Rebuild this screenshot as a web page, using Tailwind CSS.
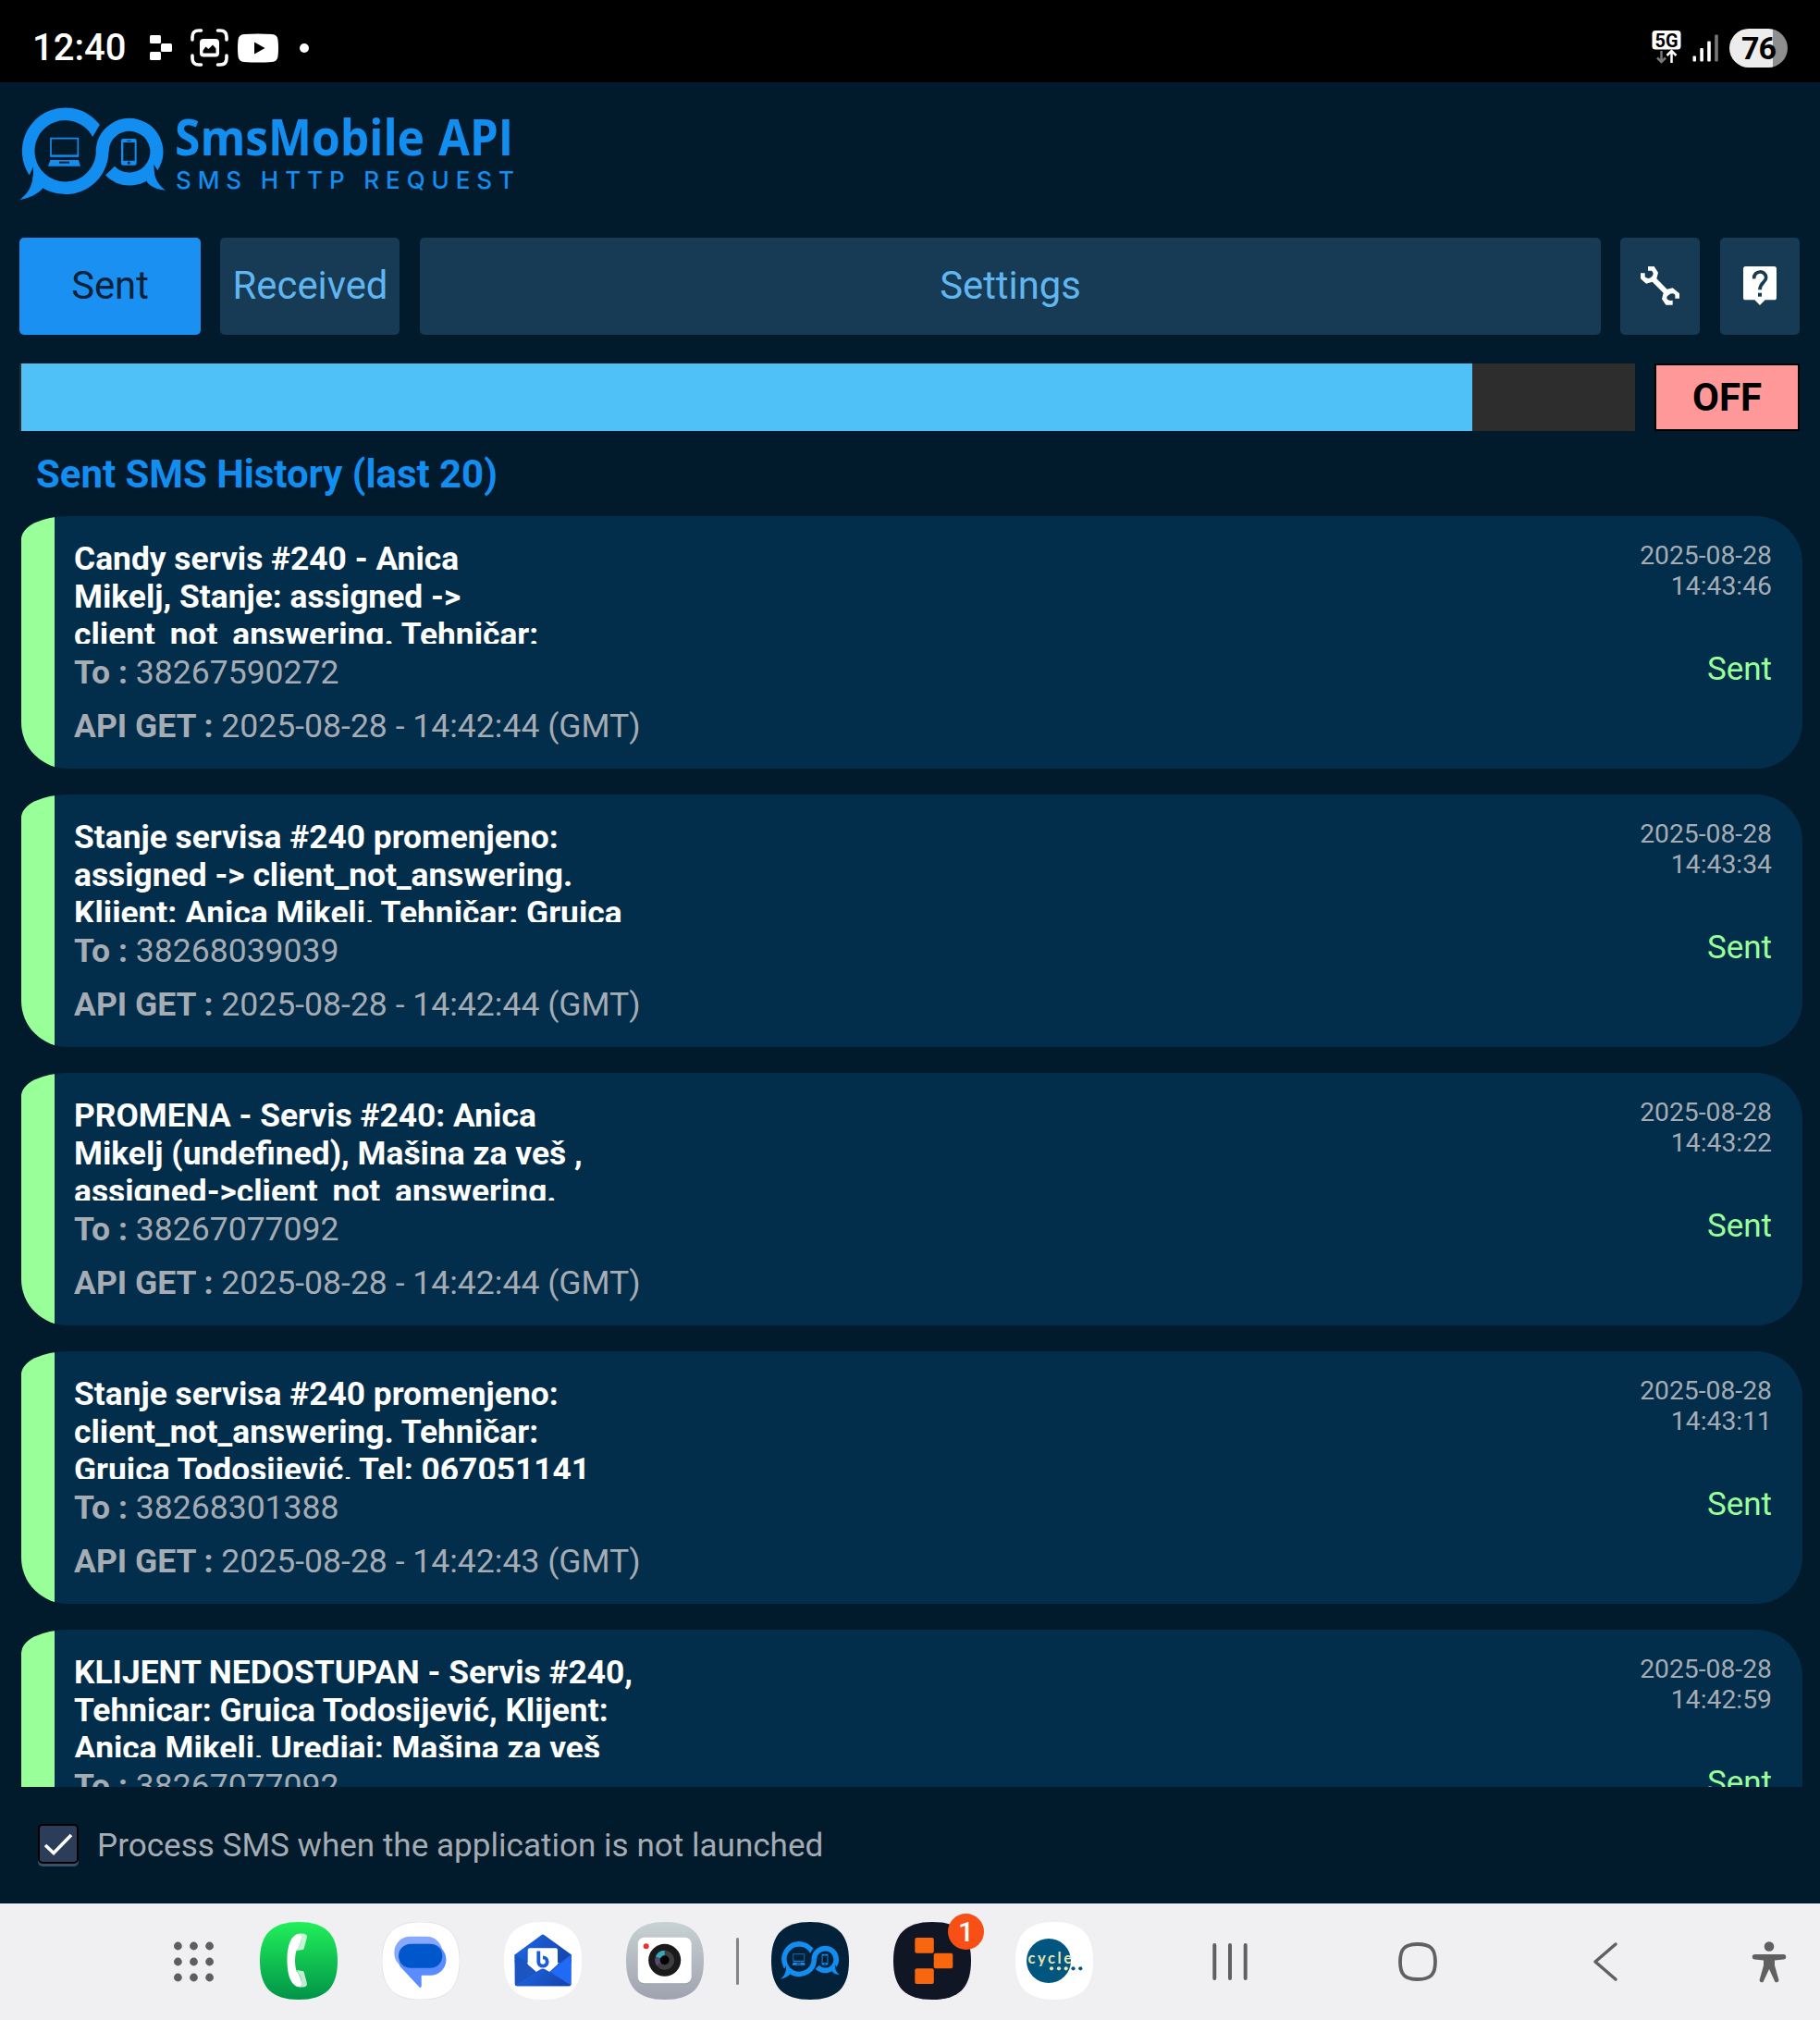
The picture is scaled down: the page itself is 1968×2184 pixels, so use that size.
<!DOCTYPE html>
<html lang="en">
<head>
<meta charset="utf-8">
<title>SmsMobile API</title>
<script src="https://cdn.jsdelivr.net/npm/@tailwindcss/browser@4"></script>
</head>
<body class="bg-black">
<svg width="0" height="0" class="absolute">
  <defs>
    <!-- Two linked speech bubbles; currentColor is the backdrop -->
    <g id="bubbles">
      <path d="M289 120.500A120 120 0 1 0 302 175" fill="none" stroke="#128df0" stroke-width="41"/>
      <path d="M293 91L269 131L315 135V85Z" fill="currentColor"/>
      <path d="M302 174V177A88 88 0 1 1 327 239" fill="none" stroke="#128df0" stroke-width="42"/>
      <path d="M66 252L78 226C82 265 70 300 35 332L30 255Z" fill="currentColor"/>
      <path d="M78 226C80 270 72 305 34 333C65 328 90 315 108 297L120 255Z" fill="#128df0"/>
      <path d="M469 218L481 238L522 255L506 301C480 280 468 255 469 218Z" fill="currentColor"/>
      <path d="M468 218C468 255 478 280 507 302C480 299 460 292 447 276L440 240Z" fill="#128df0"/>
      <path d="M135 134H223V190H135Z" fill="none" stroke="#128df0" stroke-width="5"/>
      <path d="M133 188H225V194H133ZM133 204H225L231 224H126Z" fill="#128df0"/>
      <path d="M162 209H195V215H162Z" fill="currentColor"/>
      <rect x="363" y="135" width="50" height="86" rx="6" fill="#128df0"/>
      <path d="M370 147H407V206H370ZM382 140H395V143H382Z" fill="currentColor"/>
      <circle cx="388" cy="213" r="4.500" fill="currentColor"/>
    </g>
    <path id="squircle" d="M42 0C71 0 84 13 84 42S71 84 42 84 0 71 0 42 13 0 42 0Z"/>
    <linearGradient id="green" x2="0" y2="1"><stop stop-color="#22f05a"/><stop offset="1" stop-color="#009348"/></linearGradient>
    <linearGradient id="silver" x2="0" y2="1"><stop stop-color="#c8d1d3"/><stop offset="1" stop-color="#9fa2af"/></linearGradient>
    <linearGradient id="fold" x2="1" y2="0.3"><stop stop-color="#1d68ea"/><stop offset="1" stop-color="#1748b0"/></linearGradient>
  </defs>
</svg>

<div class="flex h-[2184px] w-[1968px] flex-col overflow-hidden bg-[#011a2c] font-['Roboto',sans-serif]">

  <!-- Status bar -->
  <header class="flex h-[89px] shrink-0 items-center bg-black pr-[35px] pl-[35px] pt-[14px] text-white">
    <span class="w-[127px] text-[40px] leading-none font-medium">12:40</span>
    <svg width="24" height="27" viewBox="0 0 24 27" fill="#fff"><rect width="12" height="9" rx="1.500"/><rect x="12" y="9" width="12" height="9" rx="1.500"/><rect y="18" width="12" height="9" rx="1.500"/></svg>
    <svg class="ml-[20px]" width="41" height="41" viewBox="0 0 41 41" fill="none" stroke="#fff" stroke-width="3.600" stroke-linecap="round"><path d="M2 12V9Q2 2 9 2H11.500M29.500 2H32Q39 2 39 9V12M39 29V32Q39 39 32 39H29.500M11.500 39H9Q2 39 2 32V29"/><rect x="10" y="11" width="21" height="19.500" rx="4" fill="#fff" stroke="none"/><path d="M13.500 26.500V23.500L16.500 19.500 19.500 22 24 17.500 27.500 21.500V26.500Z" fill="#000" stroke="none"/></svg>
    <svg class="ml-[10px]" width="44" height="32" viewBox="0 0 44 32"><path d="M7 1Q22 0 37 1 43 1.500 43.500 7 44.500 16 43.500 25 43 30.500 37 31 22 32 7 31 1 30.500.500 25-.500 16 .500 7 1 1.500 7 1Z" fill="#fff"/><path d="M18 9.500L29.500 16L18 22.500Z" fill="#000"/></svg>
    <span class="ml-[23px] size-[10px] rounded-full bg-white"></span>
    <svg class="ml-auto" width="33" height="37" viewBox="0 0 33 37"><rect x="0.500" width="31" height="20.500" rx="3.500" fill="#fff"/><text x="16" y="17.500" text-anchor="middle" font-size="20" font-weight="700" textLength="25" lengthAdjust="spacingAndGlyphs" fill="#000">5G</text><path d="M10.500 22V33M6 29.500L10.500 34L15 29.500" fill="none" stroke="#777" stroke-width="2.500"/><path d="M21.500 35V23M16.500 27L21.500 22L26.500 27" fill="none" stroke="#fff" stroke-width="2.500"/></svg>
    <svg class="ml-[11px]" width="29" height="30" viewBox="0 0 29 30"><rect x="0.500" y="23.500" width="3.500" height="6" rx="1" fill="#fff"/><rect x="8.300" y="15" width="3.600" height="14.500" rx="1" fill="#fff"/><rect x="16.200" y="7.500" width="3.600" height="22" rx="1" fill="#fff"/><rect x="24.200" y="0.500" width="3.600" height="29" rx="1" fill="#777"/></svg>
    <span class="ml-[11px] flex h-[42px] w-[63px] items-center justify-center rounded-full bg-[linear-gradient(90deg,#ececec_47px,#8e8e8e_47px)] text-[34px] leading-none font-bold tracking-[-1px] text-black">76</span>
  </header>

  <!-- Logo -->
  <div class="h-[168px] shrink-0 pt-[16px] pl-[10px] text-[#011a2c]">
    <svg width="560" height="120" viewBox="0 0 560 120">
      <use href="#bubbles" transform="scale(0.33333)"/>
      <g fill="#128df0" font-family="Open Sans, sans-serif" font-size="54" font-weight="700">
        <text x="179" y="63" textLength="270" lengthAdjust="spacingAndGlyphs">SmsMobile</text>
        <text x="464" y="63" textLength="81" lengthAdjust="spacingAndGlyphs">API</text>
      </g>
      <text x="180" y="99" font-family="Inter, sans-serif" font-size="26" font-weight="500" textLength="366" fill="#128df0">SMS HTTP REQUEST</text>
    </svg>
  </div>

  <!-- Tabs -->
  <nav class="flex h-[105px] shrink-0 pr-[22px] pl-[21px] text-[41.800px] text-[#60b6f0]">
    <button class="w-[196px] rounded-[5px] bg-[#1a90f2] text-[#0b2238]">Sent</button>
    <button class="ml-[21px] w-[194px] rounded-[5px] bg-[#173b54] pl-[1px]">Received</button>
    <button class="ml-[22px] flex-1 rounded-[5px] bg-[#173b54]">Settings</button>
    <button class="ml-[21px] flex w-[86px] justify-center rounded-[5px] bg-[#173b54] pt-[31px]">
      <svg width="42" height="42" viewBox="0 0 126 126"><path fill="#fff" d="M24 0H44L57 20L52 40L86 74L104 70L126 88V104H112V92Q104 84 92 92Q82 98 86 106Q92 114 104 110V125H82L69 106L74 86L38 50L18 56L0 40V22H14V34Q26 44 36 34Q46 22 36 14H24Z"/></svg>
    </button>
    <button class="ml-[22px] flex w-[86px] justify-center rounded-[5px] bg-[#173b54] pt-[31px]">
      <svg width="36" height="42" viewBox="0 0 108 126"><path fill="#fff" d="M8 0H100Q108 0 108 8V101Q108 109 100 109H71L54 126L37 109H8Q0 109 0 101V8Q0 0 8 0Z"/><path d="M35 40C33 11 74 11 74 37C74 52 54 52 54 76" fill="none" stroke="#173b54" stroke-width="11"/><path fill="#173b54" d="M48 86H60V98H48Z"/></svg>
    </button>
  </nav>

  <!-- Progress and switch -->
  <div class="mt-[31px] flex h-[73px] shrink-0 pr-[22px] pl-[21px]">
    <div class="flex-1 bg-[#2d2d2d] pl-[2px]"><div class="h-full bg-[#4fc1f7]" style="width:89.9%"></div></div>
    <button class="ml-[21px] w-[157px] border-2 border-black bg-[#ff9999] text-[42px] leading-none font-bold text-black">OFF</button>
  </div>

  <h1 class="mt-[22px] h-[70px] shrink-0 pl-[39px] text-[41.900px] leading-[49px] font-bold text-[#128df0]">Sent SMS History (last 20)</h1>

  <!-- Message list -->
  <main class="flex h-[1374px] shrink-0 flex-col gap-[28px] overflow-hidden pr-[19px] pl-[23px] text-[35.550px] leading-[41px] whitespace-nowrap text-[#a5acb4]">
    <article class="flex h-[273px] shrink-0 overflow-hidden rounded-[50px] rounded-tl-[50px_25px] bg-[#032e4b] pr-[33px]">
      <div class="w-[36px] bg-[#99ff99]"></div>
      <div class="flex-1 pt-[26px] pl-[21px]"><p class="h-[112px] overflow-hidden text-[35.370px] font-bold text-white">Candy servis #240 - Anica<br>Mikelj, Stanje: assigned -&gt;<br>client_not_answering. Tehničar:</p><p class="mt-[11px]"><b>To :</b> 38267590272</p><p class="mt-[17px]"><b>API GET :</b> 2025-08-28 - 14:42:44 (GMT)</p></div>
      <div class="pt-[26px] text-right"><p class="text-[28.300px] leading-[33px]">2025-08-28<br>14:43:46</p><p class="mt-[53px] text-[35px] text-[#99ff99]">Sent</p></div>
    </article>
    <article class="flex h-[273px] shrink-0 overflow-hidden rounded-[50px] rounded-tl-[50px_25px] bg-[#032e4b] pr-[33px]">
      <div class="w-[36px] bg-[#99ff99]"></div>
      <div class="flex-1 pt-[26px] pl-[21px]"><p class="h-[112px] overflow-hidden text-[35.370px] font-bold text-white">Stanje servisa #240 promenjeno:<br>assigned -&gt; client_not_answering.<br>Klijent: Anica Mikelj, Tehničar: Gruica</p><p class="mt-[11px]"><b>To :</b> 38268039039</p><p class="mt-[17px]"><b>API GET :</b> 2025-08-28 - 14:42:44 (GMT)</p></div>
      <div class="pt-[26px] text-right"><p class="text-[28.300px] leading-[33px]">2025-08-28<br>14:43:34</p><p class="mt-[53px] text-[35px] text-[#99ff99]">Sent</p></div>
    </article>
    <article class="flex h-[273px] shrink-0 overflow-hidden rounded-[50px] rounded-tl-[50px_25px] bg-[#032e4b] pr-[33px]">
      <div class="w-[36px] bg-[#99ff99]"></div>
      <div class="flex-1 pt-[26px] pl-[21px]"><p class="h-[112px] overflow-hidden text-[35.370px] font-bold text-white">PROMENA - Servis #240: Anica<br>Mikelj (undefined), Mašina za veš ,<br>assigned-&gt;client_not_answering.</p><p class="mt-[11px]"><b>To :</b> 38267077092</p><p class="mt-[17px]"><b>API GET :</b> 2025-08-28 - 14:42:44 (GMT)</p></div>
      <div class="pt-[26px] text-right"><p class="text-[28.300px] leading-[33px]">2025-08-28<br>14:43:22</p><p class="mt-[53px] text-[35px] text-[#99ff99]">Sent</p></div>
    </article>
    <article class="flex h-[273px] shrink-0 overflow-hidden rounded-[50px] rounded-tl-[50px_25px] bg-[#032e4b] pr-[33px]">
      <div class="w-[36px] bg-[#99ff99]"></div>
      <div class="flex-1 pt-[26px] pl-[21px]"><p class="h-[112px] overflow-hidden text-[35.370px] font-bold text-white">Stanje servisa #240 promenjeno:<br>client_not_answering. Tehničar:<br>Gruica Todosijević, Tel: 067051141</p><p class="mt-[11px]"><b>To :</b> 38268301388</p><p class="mt-[17px]"><b>API GET :</b> 2025-08-28 - 14:42:43 (GMT)</p></div>
      <div class="pt-[26px] text-right"><p class="text-[28.300px] leading-[33px]">2025-08-28<br>14:43:11</p><p class="mt-[53px] text-[35px] text-[#99ff99]">Sent</p></div>
    </article>
    <article class="flex h-[273px] shrink-0 overflow-hidden rounded-[50px] rounded-tl-[50px_25px] bg-[#032e4b] pr-[33px]">
      <div class="w-[36px] bg-[#99ff99]"></div>
      <div class="flex-1 pt-[26px] pl-[21px]"><p class="h-[112px] overflow-hidden text-[35.370px] font-bold text-white">KLIJENT NEDOSTUPAN - Servis #240,<br>Tehnicar: Gruica Todosijević, Klijent:<br>Anica Mikelj, Uredjaj: Mašina za veš</p><p class="mt-[11px]"><b>To :</b> 38267077092</p></div>
      <div class="pt-[26px] text-right"><p class="text-[28.300px] leading-[33px]">2025-08-28<br>14:42:59</p><p class="mt-[53px] text-[35px] text-[#99ff99]">Sent</p></div>
    </article>
  </main>

  <!-- Background processing option -->
  <label class="flex h-[126px] shrink-0 items-center pl-[41px] text-[35.100px] text-[#a5acb4]">
    <span class="mb-[3px] flex h-[43px] w-[44px] items-center justify-center rounded-[5px] border-2 border-black bg-[#2b3d59] shadow-[0_3px_0_#3c4f69]">
      <svg width="34" height="26" viewBox="0 0 34 26" fill="none" stroke="#fff" stroke-width="3.600"><path d="M3 14L12 22.500L31 3"/></svg>
    </span>
    <span class="ml-[20px]">Process SMS when the application is not launched</span>
  </label>

  <!-- Taskbar -->
  <footer class="flex h-[126px] shrink-0 items-center bg-[#f0f0f3] pb-[2px] pl-[185px]">
    <svg width="48" height="84" viewBox="0 0 48 84" fill="#5e5e5e"><circle cx="7.400" cy="26" r="4.400"/><circle cx="24.500" cy="26" r="4.400"/><circle cx="41.600" cy="26" r="4.400"/><circle cx="7.400" cy="43" r="4.400"/><circle cx="24.500" cy="43" r="4.400"/><circle cx="41.600" cy="43" r="4.400"/><circle cx="7.400" cy="60" r="4.400"/><circle cx="24.500" cy="60" r="4.400"/><circle cx="41.600" cy="60" r="4.400"/></svg>
    <div class="ml-[48px] flex gap-[48px]">
      <svg width="84" height="84" viewBox="0 0 84 84"><use href="#squircle" fill="url(#green)"/><path fill="#fff" d="M44 12.500C34 12.500 29.500 25 29.500 41.500S34 70.500 44 70.500C47 66 43 56 39.500 53C37.500 46 37.500 37 39.500 31C43 27 47 17 44 12.500Z"/><path fill="#fff" fill-opacity="0.750" d="M44 12.500Q52 12 50.800 17L47.800 28.500Q47.500 30 46 30L39.500 31C42 27 47 22 44 12.500ZM44 70.500Q52 71 50.800 66L47.800 54.500Q47.500 53 46 53L39.500 52C42 56 47 61 44 70.500Z"/></svg>
      <svg width="84" height="84" viewBox="0 0 84 84"><use href="#squircle" fill="#fff" stroke="#dedee2" stroke-width="0.800"/><rect x="13.300" y="15.700" width="52" height="35" rx="17" fill="#86a9ff"/><path fill="#5a8bff" d="M52.500 23.700A17 17 0 0 1 52.500 57.700H42.700V69.500Q42 72 40 70L19.500 48C17 40 24 24 35 23.700Z"/><rect x="18" y="23.700" width="47.300" height="26" rx="13" fill="#0057cc"/></svg>
      <svg width="84" height="84" viewBox="0 0 84 84"><use href="#squircle" fill="#fff"/><path fill="url(#fold)" d="M40 14.500Q42 12.500 44 14.500L72.700 35.300V44H11.700V35.300Z"/><path fill="#1a55c8" d="M11.700 35.300L42 56L72.700 35.300V67Q72.700 69.300 70 69.300H14Q11.700 69.300 11.700 67Z"/><path fill="#fff" d="M28 28.300H56Q58 28.300 58 30.500V46L49 54L42 50L35 54L25.700 46V30.500Q25.700 28.300 28 28.300Z"/><path fill="#1c54c2" d="M11.700 35.300L34 54L12 68Z"/><path fill="#216af5" d="M72.700 35.300L50 54L72 68Z"/><path fill="url(#fold)" d="M12.500 68.500L39 51.500Q42 49.500 45 51.500L72 68.500Q71 69.300 70 69.300H14Q13 69.300 12.500 68.500Z"/><path d="M37.300 31.500V43A4.700 4.700 0 1 0 42 38.300" fill="none" stroke="#1b5bd6" stroke-width="3.800"/></svg>
      <svg width="84" height="84" viewBox="0 0 84 84"><use href="#squircle" fill="url(#silver)"/><rect x="12.700" y="17.500" width="58" height="49.800" rx="7" fill="#8b8e99" opacity="0.500"/><rect x="12.700" y="16.700" width="58" height="49.600" rx="7" fill="#fff"/><circle cx="41.700" cy="41.300" r="17.500" fill="#1a191b"/><circle cx="41.700" cy="41.300" r="10.500" fill="#403e42"/><path d="M41.700 41.300V30.800A10.500 10.500 0 0 0 32 37.500Z" fill="#35a9b8"/><path d="M41.700 41.300L32 37.500A10.500 10.500 0 0 0 33 47Z" fill="#5b4a78"/><circle cx="41.700" cy="41.300" r="5" fill="#000"/><circle cx="21.700" cy="26.300" r="3" fill="#e8312f"/></svg>
    </div>
    <span class="ml-[35px] h-[51px] w-[3px] rounded-full bg-[#858585]"></span>
    <div class="ml-[35px] flex gap-[48px]">
      <svg class="text-[#03223a]" width="84" height="84" viewBox="0 0 84 84"><use href="#squircle" fill="#03223a"/><use href="#bubbles" transform="translate(5.500 16.500) scale(0.1353)"/></svg>
      <div class="relative">
        <svg width="84" height="84" viewBox="0 0 84 84"><use href="#squircle" fill="#101624"/><g fill="#f8670e"><rect x="23.300" y="17" width="20.500" height="16.700" rx="2"/><rect x="43.700" y="33.700" width="20.600" height="16.500" rx="2"/><rect x="23.300" y="50.200" width="20.500" height="16.700" rx="2"/></g></svg>
        <span class="absolute -top-[9px] left-[59px] flex size-[39px] items-center justify-center rounded-full bg-[#f74f16] text-[30px] leading-none font-medium text-white">1</span>
      </div>
      <svg width="84" height="84" viewBox="0 0 84 84"><use href="#squircle" fill="#fff"/><circle cx="36" cy="42" r="24" fill="#015680"/><text x="13.500" y="45" font-family="Lato, sans-serif" font-size="16.500" font-weight="700" textLength="47.500" fill="#e9e3b0">cycle</text><g fill="#e9e3b0"><circle cx="39" cy="50.300" r="2.100"/><circle cx="47" cy="50.300" r="2.100"/><circle cx="54.700" cy="50.300" r="2.100"/></g><g fill="#015680"><circle cx="62.500" cy="50.300" r="2.100"/><circle cx="70.300" cy="50.300" r="2.100"/></g></svg>
    </div>
    <svg class="ml-[124px]" width="48" height="48" viewBox="0 0 48 48" stroke="#606060" stroke-width="4" stroke-linecap="round"><path d="M7.300 7V43M24 7V43M40.700 7V43"/></svg>
    <svg class="ml-[155px]" width="48" height="48" viewBox="0 0 48 48" fill="none" stroke="#606060" stroke-width="3.800"><path d="M24 6C38 6 43 11 43 25S38 44 24 44 5 39 5 25 10 6 24 6Z"/></svg>
    <svg class="ml-[155px]" width="48" height="48" viewBox="0 0 48 48" fill="none" stroke="#606060" stroke-width="3.500" stroke-linecap="round" stroke-linejoin="round"><path d="M35 6L13 25L35 44"/></svg>
    <svg class="ml-[129px]" width="48" height="48" viewBox="0 0 48 48" fill="#606060"><circle cx="24" cy="8.500" r="5.300"/><path d="M8.500 17H39.500A2.700 2.700 0 0 1 39.500 22.400L30 23.500V29L34.500 45Q34 48 30.500 47L24 33L17.500 47Q14 48 13.500 45L18 29V23.500L8.500 22.400A2.700 2.700 0 0 1 8.500 17Z"/></svg>
  </footer>
</div>
</body>
</html>
